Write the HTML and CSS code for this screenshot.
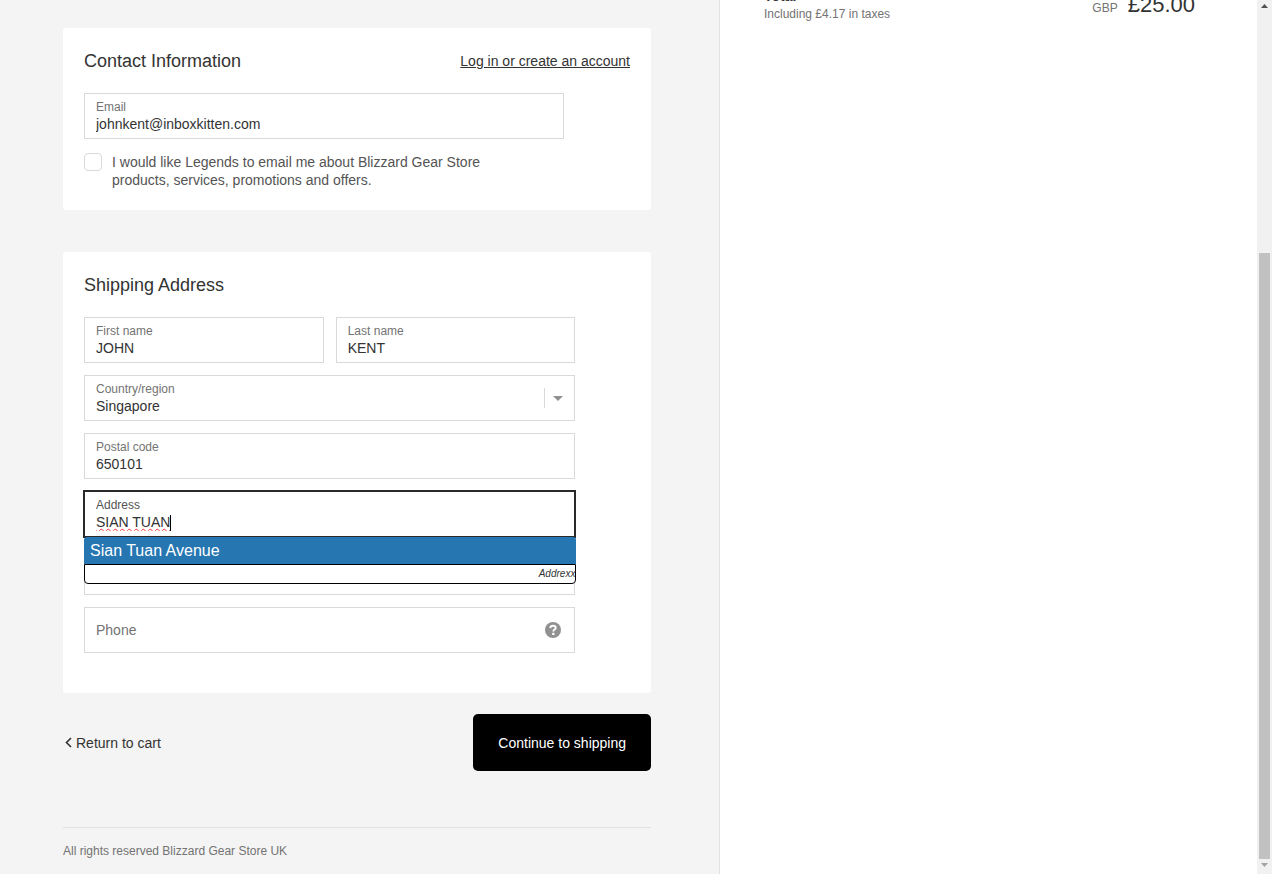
FILE: index.html
```html
<!DOCTYPE html>
<html lang="en">
<head>
    <meta charset="UTF-8">
    <meta name="viewport" content="width=device-width, initial-scale=1">
    <title>Information - Blizzard Gear Store UK - Checkout</title>
    <link rel="stylesheet" href="styles.css">
</head>
<body>
    <div class="page">
        <main class="main">
            <form class="checkout">
                <section class="card">
                    <div class="card-header">
                        <h2>Contact Information</h2>
                        <a href="#">Log in or create an account</a>
                    </div>
                    <div class="field field-email">
                        <label for="email">Email</label>
                        <input type="email" id="email" value="johnkent@inboxkitten.com">
                    </div>
                    <div class="newsletter">
                        <input type="checkbox" id="newsletter">
                        <label for="newsletter">I would like Legends to email me about Blizzard Gear Store products, services, promotions and offers.</label>
                    </div>
                </section>

                <section class="card card-shipping">
                    <div class="card-header">
                        <h2>Shipping Address</h2>
                    </div>
                    <div class="fields">
                        <div class="field-row">
                            <div class="field">
                                <label for="firstName">First name</label>
                                <input type="text" id="firstName" value="JOHN">
                            </div>
                            <div class="field">
                                <label for="lastName">Last name</label>
                                <input type="text" id="lastName" value="KENT">
                            </div>
                        </div>
                        <div class="field">
                            <label for="country">Country/region</label>
                            <select id="country">
                                <option>Singapore</option>
                            </select>
                            <div class="select-arrow">
                                <svg width="10" height="5" viewBox="0 0 10 5"><path d="M0 0h10L5 5z" fill="#919191"/></svg>
                            </div>
                        </div>
                        <div class="field">
                            <label for="postal">Postal code</label>
                            <input type="text" id="postal" value="650101">
                        </div>
                        <div class="field field-active">
                            <label for="address">Address</label>
                            <input type="text" id="address" class="misspelled" value="SIAN TUAN">
                            <span class="caret"></span>

                            <!-- Address suggestions -->
                            <div class="suggestions">
                                <button type="button" class="suggestion">Sian Tuan Avenue</button>
                                <div class="suggestions-brand">Addrexx</div>
                            </div>
                        </div>
                        <div class="field field-plain">
                            <input type="text" id="address2" aria-label="Apartment">
                        </div>
                        <div class="field field-plain">
                            <input type="tel" id="phone" placeholder="Phone" aria-label="Phone">
                            <button type="button" class="help" aria-label="Help">
                                <svg width="16" height="16" viewBox="0 0 16 16">
                                    <circle cx="8" cy="8" r="8" fill="#919191"/>
                                    <path d="M5.3 6.1C5.4 4.5 6.500 3.800 8 3.800s2.700.8 2.700 2.100c0 1.600-2.400 1.600-2.400 3.500" fill="none" stroke="#fff" stroke-width="1.9"/>
                                    <rect x="7.2" y="10.8" width="2.200" height="2.200" fill="#fff"/>
                                </svg>
                            </button>
                        </div>
                    </div>
                </section>

                <div class="actions">
                    <a href="#" class="return">
                        <svg width="7" height="11" viewBox="0 0 7 11"><path d="M6 1L1.5 5.5 6 10" fill="none" stroke="#333" stroke-width="1.6"/></svg>
                        Return to cart
                    </a>
                    <button type="submit" class="continue">Continue to shipping</button>
                </div>
            </form>
            <footer class="footer">All rights reserved Blizzard Gear Store UK</footer>
        </main>

        <aside class="sidebar">
            <div class="total">
                <div>
                    <div class="total-label">Total</div>
                    <div class="taxes">Including £4.17 in taxes</div>
                </div>
                <div class="total-price">
                    <span class="currency">GBP</span>
                    <span class="price">£25.00</span>
                </div>
            </div>
        </aside>

        <div class="scrollbar">
            <div class="scroll-end"><svg width="7" height="4" viewBox="0 0 7 4"><path d="M0 4h7L3.5 0z" fill="#505050"/></svg></div>
            <div class="scroll-space"></div>
            <div class="scroll-thumb"></div>
            <div class="scroll-end"><svg width="7" height="4" viewBox="0 0 7 4"><path d="M0 0h7L3.5 4z" fill="#a3a3a3"/></svg></div>
        </div>
    </div>
</body>
</html>
```

FILE: styles.css
```css
* {
    box-sizing: border-box;
}

body {
    margin: 0;
    background-color: #fff;
    color: #333;
    font-family: "Liberation Sans", Arial, sans-serif;
    font-size: 14px;
    line-height: 18px;
}

input, select, button {
    font: inherit;
    color: inherit;
}

a {
    color: #333;
}

.page {
    display: grid;
    grid-template-columns: 720fr 537fr 15px;
    min-height: 100vh;
}

.main {
    background-color: #f4f4f4;
    border-right: 1px solid #e1e1e1;
    padding: 28px 68px 14px 63px;
}

/* Cards */
.card {
    background-color: #fff;
    border-radius: 3px;
    padding: 21px;
    margin-bottom: 42px;
}

.card-shipping {
    padding-bottom: 40px;
    margin-bottom: 21px;
}

.card-header {
    display: flex;
    justify-content: space-between;
    align-items: center;
    padding-top: 1px;
    margin-bottom: 21px;
}

h2 {
    margin: 0;
    font-size: 18px;
    font-weight: normal;
    line-height: 22px;
}

/* Fields */
.fields {
    display: flex;
    flex-direction: column;
    gap: 12px;
    width: 90%;
}

.field-row {
    display: grid;
    grid-template-columns: 1fr 1fr;
    gap: 12px;
}

.field {
    position: relative;
    border: 1px solid #d9d9d9;
    background-color: #fff;
    padding: 5px 11px;
}

.field label {
    display: block;
    color: #737373;
    font-size: 12px;
    line-height: 16px;
}

.field input, .field select {
    display: block;
    width: 100%;
    height: 18px;
    padding: 0;
    border: 0;
    outline: 0;
    background: none;
    appearance: none;
}

.field-email {
    width: 88%;
    margin-bottom: 14px;
}

.field-plain input {
    height: 34px;
}

.field input::placeholder {
    color: #737373;
}

.select-arrow {
    position: absolute;
    top: 12px;
    right: 0;
    display: flex;
    align-items: center;
    height: 20px;
    padding: 0 11px 0 8px;
    border-left: 1px solid #d9d9d9;
    pointer-events: none;
}

.help {
    position: absolute;
    top: 14px;
    right: 13px;
    display: flex;
    padding: 0;
    border: 0;
    background: none;
}

.field-active {
    border-color: #2a2a2a;
    box-shadow: 0 0 0 1px #2a2a2a;
}

.field-active label {
    color: #545454;
}

.field .misspelled {
    text-decoration: underline wavy #f33 1px;
    text-underline-offset: 1px;
}

.caret {
    position: absolute;
    top: 23px;
    left: 85px;
    width: 1px;
    height: 16px;
    background-color: #000;
}

/* Address suggestions */
.suggestions {
    position: absolute;
    z-index: 1;
    top: 45px;
    left: -1px;
    right: -2px;
}

.suggestion {
    display: block;
    width: 100%;
    height: 27px;
    padding: 0 6px;
    border: 0;
    border-radius: 3px 3px 0 0;
    background-color: #2676b2;
    color: #fff;
    font-size: 16px;
    text-align: left;
}

.suggestions-brand {
    border: 1px solid #000;
    border-radius: 0 0 4px 4px;
    background-color: #fff;
    font-size: 10px;
    font-style: italic;
    text-align: right;
}

/* Newsletter */
.newsletter {
    display: flex;
    gap: 10px;
    max-width: 420px;
    color: #545454;
}

.newsletter input {
    flex: none;
    appearance: none;
    width: 18px;
    height: 18px;
    margin: 0;
    border: 1px solid #d9d9d9;
    border-radius: 4px;
    background-color: #fff;
}

/* Actions */
.actions {
    display: flex;
    justify-content: space-between;
    align-items: center;
}

.return {
    display: flex;
    align-items: center;
    gap: 4px;
    padding-left: 2px;
    text-decoration: none;
}

.continue {
    height: 57px;
    padding: 0 25px;
    border: 0;
    border-radius: 5px;
    background-color: #000;
    color: #fff;
}

.footer {
    margin-top: 56px;
    padding-top: 14px;
    border-top: 1px solid #e1e1e1;
    color: #737373;
    font-size: 12px;
}

/* Order summary */
.sidebar {
    overflow: hidden;
    padding: 0 62px 0 44px;
}

.total {
    display: flex;
    justify-content: space-between;
    align-items: flex-start;
    margin-top: -13px;
}

.total-label {
    font-weight: bold;
}

.taxes, .currency {
    color: #737373;
    font-size: 12px;
}

.total-price {
    display: flex;
    align-items: baseline;
    gap: 10px;
    line-height: 36px;
}

.price {
    font-size: 22px;
}

/* Scrollbar */
.scrollbar {
    display: flex;
    flex-direction: column;
    background-color: #f1f1f1;
}

.scroll-end {
    display: flex;
    justify-content: center;
    height: 15px;
    padding-top: 4px;
}

.scroll-space {
    flex: 238;
}

.scroll-thumb {
    flex: 606;
    margin: 0 2px;
    background-color: #c1c1c1;
}
```
